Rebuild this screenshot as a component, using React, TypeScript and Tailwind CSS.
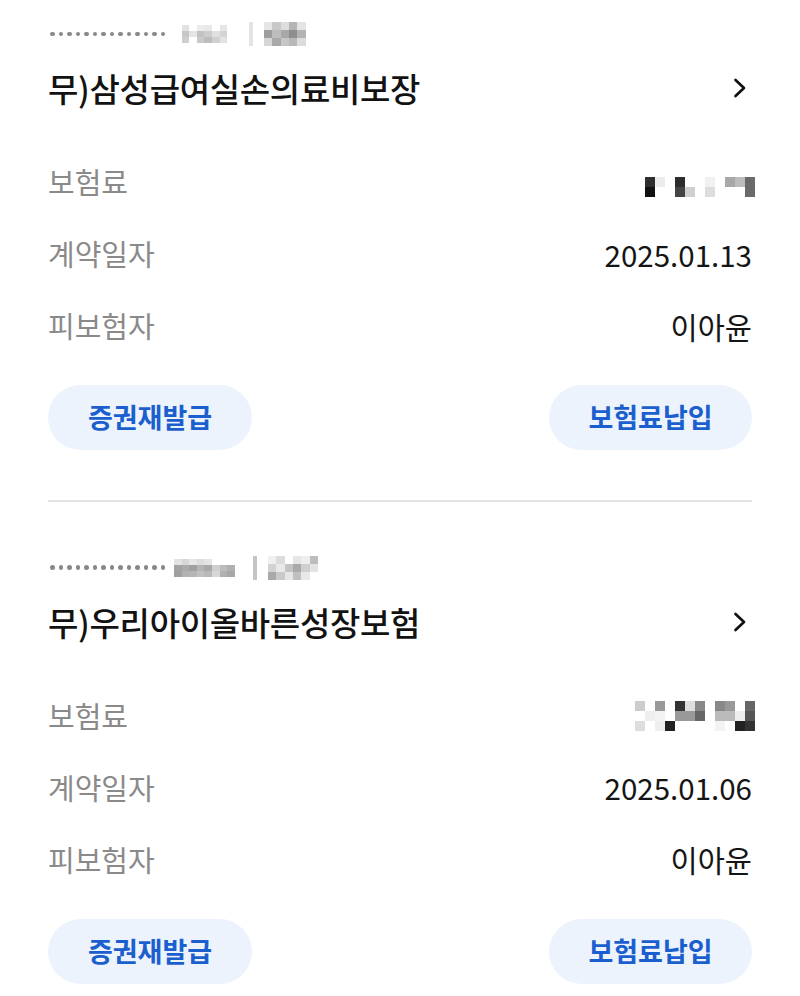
import React from 'react'

type Policy = {
  name: string
  date: string
  insured: string
  idMosaic: string[][]
  typeMosaic: string[][]
  premiumMosaic: string[][]
  sep: string
}

const W = 'bg-transparent'

const policies: Policy[] = [
  {
    name: '무)삼성급여실손의료비보장',
    date: '2025.01.13',
    insured: '이아윤',
    sep: 'ml-[14px] bg-[#e4e4e4]',
    idMosaic: [
      [W, 'bg-[#e2e2e2]', W, 'bg-[#ececec]', 'bg-[#e8e8e8]', W, 'bg-[#e6e6e6]', W],
      [W, 'bg-[#c8c8c8]', 'bg-[#e4e4e4]', 'bg-[#c2c2c2]', 'bg-[#cdcdcd]', 'bg-[#e0e0e0]', 'bg-[#d4d4d4]', W],
      [W, 'bg-[#cfcfcf]', W, 'bg-[#c9c9c9]', 'bg-[#bdbdbd]', 'bg-[#d0d0d0]', 'bg-[#e2e2e2]', W],
    ],
    typeMosaic: [
      ['bg-[#e6e6e6]', 'bg-[#c8c8c8]', 'bg-[#dddddd]', 'bg-[#b5b5b5]', 'bg-[#e4e4e4]'],
      ['bg-[#9e9e9e]', 'bg-[#bdbdbd]', 'bg-[#a8a8a8]', 'bg-[#8f8f8f]', 'bg-[#b3b3b3]'],
      ['bg-[#d6d6d6]', 'bg-[#a9a9a9]', 'bg-[#c6c6c6]', 'bg-[#b8b8b8]', 'bg-[#dcdcdc]'],
    ],
    premiumMosaic: [
      [W, W, W, W, W, W, W, W, W, W, W, W],
      [W, 'bg-[#2e2e2e]', 'bg-[#ececec]', W, 'bg-[#2c2c2c]', W, W, 'bg-[#f1f1f1]', W, 'bg-[#a8a8a8]', 'bg-[#bcbcbc]', 'bg-[#6a6a6a]'],
      [W, 'bg-[#111111]', W, W, 'bg-[#444444]', 'bg-[#cfcfcf]', W, 'bg-[#dddddd]', W, W, W, 'bg-[#6a6a6a]'],
    ],
  },
  {
    name: '무)우리아이올바른성장보험',
    date: '2025.01.06',
    insured: '이아윤',
    sep: 'ml-[18px] bg-[#c4c4c4]',
    idMosaic: [
      ['bg-[#e2e2e2]', 'bg-[#d6d6d6]', 'bg-[#e6e6e6]', 'bg-[#dddddd]', 'bg-[#e4e4e4]', W, W, W],
      ['bg-[#a3a3a3]', 'bg-[#aaaaaa]', 'bg-[#a0a0a0]', 'bg-[#b5b5b5]', 'bg-[#a8a8a8]', 'bg-[#cfcfcf]', 'bg-[#bcbcbc]', 'bg-[#b0b0b0]'],
      ['bg-[#9f9f9f]', 'bg-[#b2b2b2]', 'bg-[#b5b5b5]', 'bg-[#c0c0c0]', 'bg-[#b9b9b9]', 'bg-[#d7d7d7]', 'bg-[#b0b0b0]', 'bg-[#a8a8a8]'],
    ],
    typeMosaic: [
      ['bg-[#f0f0f0]', 'bg-[#dcdcdc]', W, 'bg-[#e6e6e6]', 'bg-[#eeeeee]', 'bg-[#bdbdbd]'],
      ['bg-[#d3d3d3]', 'bg-[#e9e9e9]', 'bg-[#c4c4c4]', 'bg-[#aaaaaa]', 'bg-[#cfcfcf]', 'bg-[#e3e3e3]'],
      ['bg-[#a9a9a9]', 'bg-[#c9c9c9]', 'bg-[#e6e6e6]', 'bg-[#c0c0c0]', 'bg-[#e8e8e8]', W],
    ],
    premiumMosaic: [
      ['bg-[#cccccc]', W, 'bg-[#999999]', W, 'bg-[#333333]', 'bg-[#dddddd]', 'bg-[#888888]', W, 'bg-[#888888]', 'bg-[#999999]', W, 'bg-[#666666]'],
      [W, 'bg-[#eeeeee]', 'bg-[#f3f3f3]', W, 'bg-[#999999]', 'bg-[#999999]', 'bg-[#666666]', W, 'bg-[#bbbbbb]', 'bg-[#bbbbbb]', 'bg-[#eeeeee]', 'bg-[#555555]'],
      ['bg-[#dddddd]', W, 'bg-[#eeeeee]', 'bg-[#222222]', W, W, W, W, 'bg-[#f3f3f3]', W, 'bg-[#222222]', 'bg-[#333333]'],
    ],
  },
]

function Mosaic({ rows, cell }: { rows: string[][]; cell: string }) {
  return (
    <div className="flex flex-col">
      {rows.map((row, i) => (
        <div key={i} className="flex">
          {row.map((c, j) => (
            <div key={j} className={`${cell} ${c}`} />
          ))}
        </div>
      ))}
    </div>
  )
}

function Chevron() {
  return (
    <svg width="16" height="22" viewBox="0 0 16 22" fill="none" className="mr-[4px]">
      <path d="M3.5 3 L12 11 L3.5 19" stroke="#111" strokeWidth="2.7" strokeLinecap="round" strokeLinejoin="round" />
    </svg>
  )
}

function PolicyCard({ p }: { p: Policy }) {
  return (
    <div>
      <div className="flex items-center h-[24px]">
        <div className="flex gap-[4px] ml-[2px]">
          {Array.from({ length: 14 }).map((_, i) => (
            <span key={i} className="w-[4.5px] h-[4.5px] rounded-full bg-[#888888]" />
          ))}
        </div>
        <div className="ml-[9px]">
          <Mosaic rows={p.idMosaic} cell="w-[7.6px] h-[6px]" />
        </div>
        <div className={`${p.sep} w-[4px] h-[24px]`} />
        <div className="ml-[11px]">
          <Mosaic rows={p.typeMosaic} cell="w-[8.4px] h-[8px]" />
        </div>
      </div>

      <div className="mt-[22px] flex items-center justify-between h-[40px]">
        <h2 className="text-[33px] font-medium text-[#121212] tracking-[-0.3px] leading-[40px]">{p.name}</h2>
        <Chevron />
      </div>

      <div className="mt-[38px]">
        <div className="flex items-center justify-between h-[72px]">
          <span className="text-[29px] text-[#8a8a8a]">보험료</span>
          <div className="mr-[-3px]">
            <Mosaic rows={p.premiumMosaic} cell="w-[10px] h-[10px]" />
          </div>
        </div>
        <div className="flex items-center justify-between h-[72px]">
          <span className="text-[29px] text-[#8a8a8a]">계약일자</span>
          <span className="text-[29.5px] text-[#151515]">{p.date}</span>
        </div>
        <div className="flex items-center justify-between h-[72px]">
          <span className="text-[29px] text-[#8a8a8a]">피보험자</span>
          <span className="text-[29.5px] text-[#151515]">{p.insured}</span>
        </div>
      </div>

      <div className="mt-[23px] flex justify-between">
        <button className="w-[204px] h-[65px] rounded-full bg-[#edf3fc] text-[27px] font-bold text-[#1b5fcf]">
          증권재발급
        </button>
        <button className="w-[203px] h-[65px] rounded-full bg-[#edf3fc] text-[27px] font-bold text-[#1b5fcf]">
          보험료납입
        </button>
      </div>
    </div>
  )
}

export default function App() {
  return (
    <div
      className="w-[800px] h-[996px] bg-white overflow-hidden px-[48px] pt-[22px]"
      style={{ fontFamily: '"Noto Sans CJK KR", "Noto Sans", sans-serif' }}
    >
      <PolicyCard p={policies[0]} />
      <div className="mt-[50px] h-[1.5px] bg-[#e3e3e3]" />
      <div className="pt-[54px]">
        <PolicyCard p={policies[1]} />
      </div>
    </div>
  )
}
